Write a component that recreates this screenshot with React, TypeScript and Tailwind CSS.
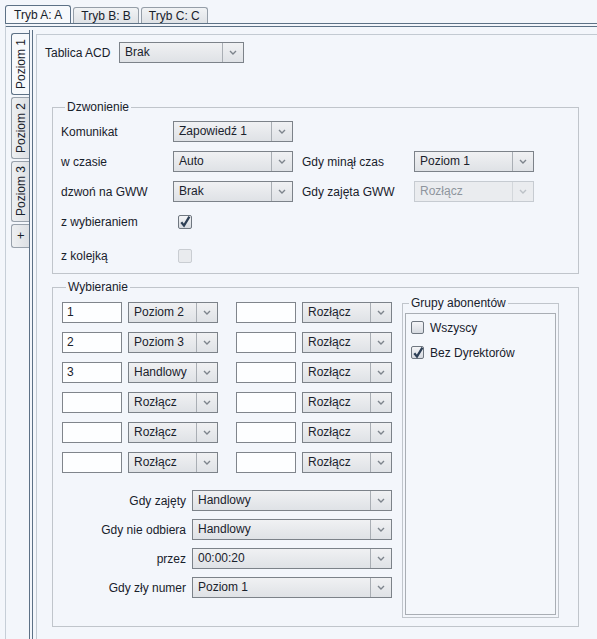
import React from 'react';

const Chevron: React.FC<{ disabled?: boolean }> = ({ disabled }) => (
  <svg width="8" height="5" viewBox="0 0 8 5">
    <path d="M1 1l3 3 3-3" fill="none" stroke={disabled ? '#bcc1c7' : '#7d848c'} strokeWidth="1.4" />
  </svg>
);

interface ComboProps {
  value: string;
  width: string;
  disabled?: boolean;
}

const Combo: React.FC<ComboProps> = ({ value, width, disabled }) => (
  <div
    className={`flex h-[21px] shrink-0 border ${width} ${
      disabled
        ? 'border-[#c6cbd1] bg-[#eaecef] text-[#8e959d]'
        : 'border-[#7c8289] bg-gradient-to-b from-[#f0f1f3] to-[#dfe2e6] text-[#1a222c]'
    }`}
  >
    <span className="flex-1 truncate pl-[5px] leading-[19px]">{value}</span>
    <span
      className={`flex w-[21px] items-center justify-center border-l ${
        disabled ? 'border-[#d3d7db]' : 'border-[#a9aeb4]'
      }`}
    >
      <Chevron disabled={disabled} />
    </span>
  </div>
);

const TextBox: React.FC<{ value?: string }> = ({ value }) => (
  <div className="h-[21px] w-[60px] shrink-0 border border-[#80858c] bg-[#fdfeff] pl-[4px] leading-[19px]">
    {value}
  </div>
);

interface CheckProps {
  checked?: boolean;
  disabled?: boolean;
  size?: string;
}

const Check: React.FC<CheckProps> = ({ checked, disabled, size = 'w-[14px] h-[14px]' }) => (
  <div
    className={`${size} flex shrink-0 items-center justify-center rounded-[2px] border ${
      disabled
        ? 'border-[#c9cdd2] bg-[#e9ebee]'
        : 'border-[#6f7780] bg-gradient-to-b from-[#f4f5f7] to-[#d6dae0]'
    }`}
  >
    {checked && (
      <svg width="12" height="12" viewBox="0 0 12 12" className="overflow-visible">
        <path d="M2.3 6.2 L5 9.6 L10.4 0.6" fill="none" stroke="#2d3f55" strokeWidth="2.3" />
      </svg>
    )}
  </div>
);

const GroupBox: React.FC<{ title: string; className: string; children: React.ReactNode }> = ({
  title,
  className,
  children,
}) => (
  <fieldset className={`border border-[#c0c5cb] ${className}`}>
    <legend className="ml-[4px] px-[2px] leading-[14px]">{title}</legend>
    {children}
  </fieldset>
);

const TopTab: React.FC<{ label: string; active?: boolean }> = ({ label, active }) => (
  <div
    className={`flex items-center rounded-t-[3px] border border-b-0 ${
      active
        ? 'h-[18px] border-[#5d7186] bg-[#f7f9fc] px-[8px]'
        : 'h-[16px] border-[#959ea8] bg-gradient-to-b from-[#f1f3f5] to-[#dfe2e6] px-[7px]'
    }`}
  >
    {label}
  </div>
);

const SideTab: React.FC<{ label: string; active?: boolean; height: string }> = ({ label, active, height }) => (
  <div
    className={`flex w-[18px] items-center justify-center rounded-l-[3px] border border-r-0 ${height} ${
      active
        ? 'border-[#5d7186] bg-[#f7f9fc]'
        : 'border-[#98a1ab] bg-gradient-to-r from-[#eef0f2] to-[#dde0e4]'
    }`}
  >
    <span className="rotate-180 whitespace-nowrap leading-[16px] [writing-mode:vertical-rl]">{label}</span>
  </div>
);

const dialRows = [
  { num: '1', target: 'Poziom 2' },
  { num: '2', target: 'Poziom 3' },
  { num: '3', target: 'Handlowy' },
  { num: '', target: 'Rozłącz' },
  { num: '', target: 'Rozłącz' },
  { num: '', target: 'Rozłącz' },
];

const bottomRows = [
  { label: 'Gdy zajęty', value: 'Handlowy' },
  { label: 'Gdy nie odbiera', value: 'Handlowy' },
  { label: 'przez', value: '00:00:20' },
  { label: 'Gdy zły numer', value: 'Poziom 1' },
];

const App: React.FC = () => {
  return (
    <div className="flex h-[639px] w-[597px] flex-col overflow-hidden bg-[#f3f6fb] pl-[5px] font-['Liberation_Sans',Arial,sans-serif] text-[12px] text-[#18212b]">
      {/* Tryb tabs */}
      <div className="flex h-[23px] shrink-0 items-end gap-[2px]">
        <TopTab label="Tryb A: A" active />
        <TopTab label="Tryb B: B" />
        <TopTab label="Tryb C: C" />
      </div>

      <div className="flex flex-1 border-t-[4px] border-l border-double border-t-[#5d7186] border-l-[#c6ced7] pl-[5px] pt-[3px]">
        {/* Poziom tabs */}
        <div className="flex shrink-0 flex-col gap-[2px] pt-[3px]">
          <SideTab label="Poziom 1" active height="h-[62px]" />
          <SideTab label="Poziom 2" height="h-[62px]" />
          <SideTab label="Poziom 3" height="h-[61px]" />
          <SideTab label="+" height="h-[24px]" />
        </div>

        <div className="flex flex-1 border-l-[4px] border-double border-[#5d7186] pl-[3px] pt-[4px]">
          <div className="flex-1 border-l border-t border-[#c3cad2]">
            <div className="ml-[8px] mt-[7px] flex items-center">
              <span className="w-[74px]">Tablica ACD</span>
              <Combo value="Brak" width="w-[125px]" />
            </div>

            <GroupBox title="Dzwonienie" className="ml-[15px] mt-[37px] w-[527px] px-[8px] pb-[7px] pt-[7px]">
              <div className="flex flex-col">
                <div className="flex h-[21px] items-center">
                  <span className="w-[112px]">Komunikat</span>
                  <Combo value="Zapowiedź 1" width="w-[120px]" />
                </div>
                <div className="mt-[9px] flex h-[21px] items-center">
                  <span className="w-[112px]">w czasie</span>
                  <Combo value="Auto" width="w-[120px]" />
                  <span className="ml-[9px] w-[112px]">Gdy minął czas</span>
                  <Combo value="Poziom 1" width="w-[120px]" />
                </div>
                <div className="mt-[9px] flex h-[21px] items-center">
                  <span className="w-[112px]">dzwoń na GWW</span>
                  <Combo value="Brak" width="w-[120px]" />
                  <span className="ml-[9px] w-[112px]">Gdy zajęta GWW</span>
                  <Combo value="Rozłącz" width="w-[120px]" disabled />
                </div>
                <div className="mt-[9px] flex h-[21px] items-center">
                  <span className="w-[117px]">z wybieraniem</span>
                  <Check checked />
                </div>
                <div className="mt-[13px] flex h-[21px] items-center">
                  <span className="w-[117px]">z kolejką</span>
                  <Check disabled />
                </div>
              </div>
            </GroupBox>

            <GroupBox title="Wybieranie" className="ml-[15px] mt-[6px] w-[527px] pl-[9px]">
              <div className="flex items-start">
                <div className="flex w-[330px] flex-col pb-[28px] pt-[8px]">
                  <div className="flex flex-col gap-[9px]">
                    {dialRows.map((row, i) => (
                      <div key={i} className="flex h-[21px] items-center">
                        <TextBox value={row.num} />
                        <div className="ml-[6px]">
                          <Combo value={row.target} width="w-[90px]" />
                        </div>
                        <div className="ml-[18px]">
                          <TextBox />
                        </div>
                        <div className="ml-[6px]">
                          <Combo value="Rozłącz" width="w-[90px]" />
                        </div>
                      </div>
                    ))}
                  </div>
                  <div className="mt-[17px] flex flex-col gap-[8px]">
                    {bottomRows.map((row) => (
                      <div key={row.label} className="flex h-[21px] items-center">
                        <span className="w-[124px] text-right">{row.label}</span>
                        <div className="ml-[6px]">
                          <Combo value={row.value} width="w-[200px]" />
                        </div>
                      </div>
                    ))}
                  </div>
                </div>

                <GroupBox title="Grupy abonentów" className="ml-[10px] mt-[2px] w-[157px] px-[2px] pb-[2px] pt-[3px]">
                  <div className="flex h-[302px] flex-col gap-[12px] border border-[#a9aeb4] bg-[#f4f7fb] pl-[5px] pt-[7px]">
                    <div className="flex h-[13px] items-center gap-[6px]">
                      <Check size="w-[13px] h-[13px]" />
                      <span>Wszyscy</span>
                    </div>
                    <div className="flex h-[13px] items-center gap-[6px]">
                      <Check size="w-[13px] h-[13px]" checked />
                      <span>Bez Dyrektorów</span>
                    </div>
                  </div>
                </GroupBox>
              </div>
            </GroupBox>
          </div>
        </div>
      </div>
    </div>
  );
};

export default App;
